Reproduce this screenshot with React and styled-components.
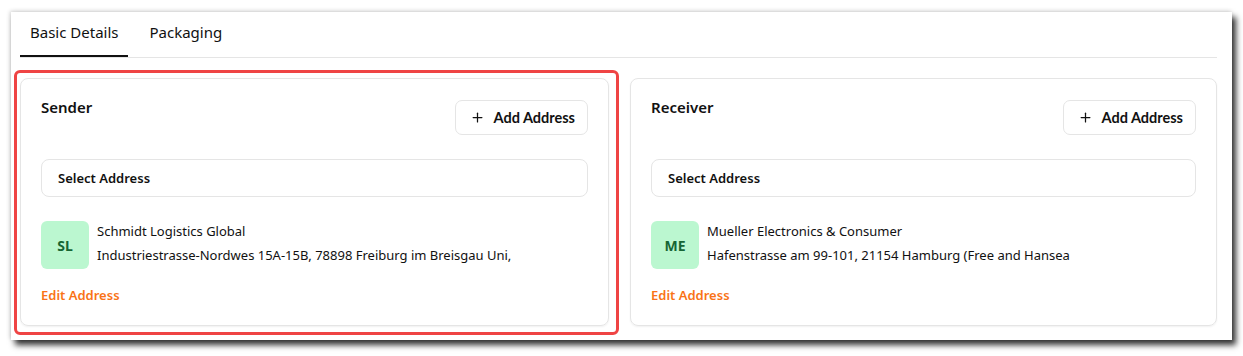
import React, { useState } from "react";
import styled, { createGlobalStyle } from "styled-components";
import { Plus } from "lucide-react";

const GlobalStyle = createGlobalStyle`
  html, body {
    margin: 0;
    padding: 0;
    background: #ffffff;
  }
  body {
    font-family: "Noto Sans", "Open Sans", sans-serif;
    color: #111111;
  }
  * { box-sizing: border-box; }
`;

const parties = [
  {
    key: "sender",
    title: "Sender",
    initials: "SL",
    name: "Schmidt Logistics Global",
    address: "Industriestrasse-Nordwes 15A-15B, 78898 Freiburg im Breisgau Uni,",
    highlighted: true,
  },
  {
    key: "receiver",
    title: "Receiver",
    initials: "ME",
    name: "Mueller Electronics & Consumer",
    address: "Hafenstrasse am 99-101, 21154 Hamburg (Free and Hansea",
  },
];

const App = () => {
  const [tab, setTab] = useState("basic");

  return (
    <>
      <GlobalStyle />
      <Page>
        <Panel>
          <Tabs>
            <Tab active={tab === "basic"} onClick={() => setTab("basic")}>
              Basic Details
            </Tab>
            <Tab active={tab === "packaging"} onClick={() => setTab("packaging")}>
              Packaging
            </Tab>
          </Tabs>
          <Cards>
            {parties.map((p) => (
              <Card key={p.key}>
                {p.highlighted && <Highlight />}
                <CardHeader>
                  <CardTitle>{p.title}</CardTitle>
                  <AddButton>
                    <Plus size={15} strokeWidth={2} />
                    Add Address
                  </AddButton>
                </CardHeader>
                <SelectBox>Select Address</SelectBox>
                <AddressRow>
                  <Avatar>{p.initials}</Avatar>
                  <AddressText>
                    <Name>{p.name}</Name>
                    <Line>{p.address}</Line>
                  </AddressText>
                </AddressRow>
                <EditLink>Edit Address</EditLink>
              </Card>
            ))}
          </Cards>
        </Panel>
      </Page>
    </>
  );
};

export default App;

const Page = styled.div`
  width: 1243px;
  height: 356px;
  padding: 12px 11px 0 11px;
`;

const Panel = styled.div`
  height: 328px;
  background: #ffffff;
  padding: 0 15px 0 9px;
  box-shadow: 4px 5px 6px rgba(0, 0, 0, 0.8), -1px -1px 4px rgba(0, 0, 0, 0.18);
`;

const Tabs = styled.div`
  display: flex;
  gap: 12px;
  height: 46px;
  border-bottom: 1px solid #e5e5e5;
  margin-bottom: 20px;
`;

const Tab = styled.button`
  background: none;
  border: none;
  font-family: inherit;
  font-size: 15px;
  color: #111111;
  padding: 0 9px 3px 10px;
  height: 45px;
  cursor: pointer;
  border-bottom: 2px solid ${({ active }) => (active ? "#111111" : "transparent")};
  text-align: left;
`;

const Cards = styled.div`
  display: grid;
  grid-template-columns: 589px 587px;
  gap: 21px;
`;

const Card = styled.div`
  position: relative;
  height: 248px;
  border: 1px solid #e5e5e5;
  border-radius: 8px;
  padding: 20px 20px 0 20px;
  box-shadow: 0 1px 2px rgba(0, 0, 0, 0.06);
`;

const Highlight = styled.div`
  position: absolute;
  top: -9px;
  left: -7px;
  right: -11px;
  bottom: -10px;
  border: 3px solid #ef4444;
  border-radius: 6px;
  pointer-events: none;
`;

const CardHeader = styled.div`
  display: flex;
  justify-content: space-between;
  align-items: flex-start;
  height: 60px;
`;

const CardTitle = styled.h3`
  margin: 0;
  font-size: 15px;
  font-weight: 600;
  line-height: 17px;
`;

const AddButton = styled.button`
  display: flex;
  align-items: center;
  gap: 9px;
  margin-top: 1px;
  height: 35px;
  padding: 0 12px 0 14px;
  background: #ffffff;
  border: 1px solid #e5e5e5;
  border-radius: 7px;
  font-family: "Lato", sans-serif;
  font-size: 14.5px;
  font-weight: 700;
  color: #111111;
  cursor: pointer;
`;

const SelectBox = styled.div`
  display: flex;
  align-items: center;
  height: 38px;
  padding: 0 16px;
  border: 1px solid #e5e5e5;
  border-radius: 8px;
  font-size: 13px;
  font-weight: 600;
`;

const AddressRow = styled.div`
  display: flex;
  gap: 8px;
  margin-top: 24px;
`;

const Avatar = styled.div`
  flex: none;
  width: 48px;
  height: 48px;
  border-radius: 6px;
  background: #bbf7d0;
  color: #166534;
  display: flex;
  align-items: center;
  justify-content: center;
  font-size: 14px;
  font-weight: 700;
`;

const AddressText = styled.div`
  display: flex;
  flex-direction: column;
  gap: 6px;
  padding-top: 1px;
  font-size: 13px;
  line-height: 18px;
`;

const Name = styled.div``;

const Line = styled.div``;

const EditLink = styled.a`
  display: block;
  margin-top: 17px;
  font-size: 13px;
  font-weight: 600;
  color: #f97316;
  cursor: pointer;
`;
